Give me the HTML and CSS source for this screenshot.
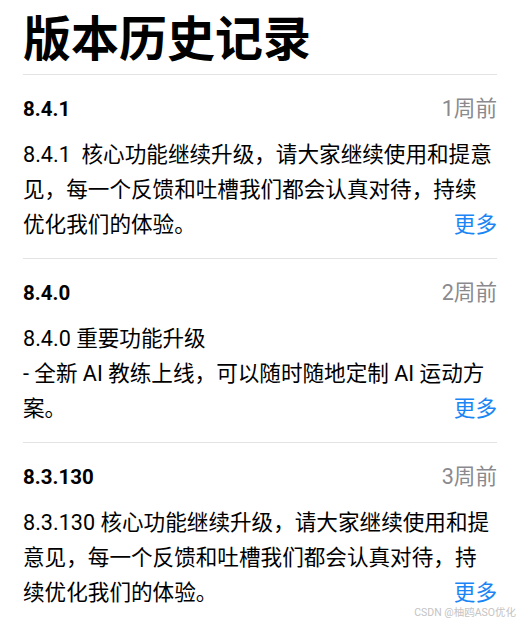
FILE: index.html
```html
<!DOCTYPE html>
<html lang="zh-CN">
<head>
    <meta charset="UTF-8">
    <meta name="viewport" content="width=device-width, initial-scale=1.0">
    <title>版本历史记录</title>
    <link rel="stylesheet" href="styles.css">
</head>
<body>
    <div class="page">
        <h1>版本历史记录</h1>

        <div class="release">
            <div class="release-head">
                <span class="version">8.4.1</span>
                <span class="date">1周前</span>
            </div>
            <p class="notes">8.4.1&nbsp; 核心功能继续升级，请大家继续使用和提意见，每一个反馈和吐槽我们都会认真对待，持续优化我们的体验。<span class="more">更多</span></p>
        </div>

        <div class="release">
            <div class="release-head">
                <span class="version">8.4.0</span>
                <span class="date">2周前</span>
            </div>
            <p class="notes">8.4.0 重要功能升级<br>- 全新 AI 教练上线，可以随时随地定制 AI 运动方案。<span class="more">更多</span></p>
        </div>

        <div class="release">
            <div class="release-head">
                <span class="version">8.3.130</span>
                <span class="date">3周前</span>
            </div>
            <p class="notes">8.3.130 核心功能继续升级，请大家继续使用和提意见，每一个反馈和吐槽我们都会认真对待，持续优化我们的体验。<span class="more">更多</span></p>
        </div>
    </div>
    <div class="watermark">CSDN @柚鸥ASO优化</div>
</body>
</html>
```

FILE: styles.css
```css
*{
    margin: 0;
    padding: 0;
    box-sizing: border-box;
}
body{
    background: #fff;
    color: #000;
    font-family: Roboto, "Noto Sans CJK SC", sans-serif;
    overflow: hidden;
}
.page{
    padding: 5px 23px 0;
}
h1{
    font-family: "Noto Sans CJK SC", sans-serif;
    font-size: 48px;
    font-weight: 700;
    line-height: 60px;
    margin-bottom: 9px;
}
.release{
    border-top: 1px solid #e3e3e5;
    padding: 17px 0 16px;
}
.release-head{
    display: flex;
    justify-content: space-between;
    align-items: center;
    height: 34px;
    line-height: 34px;
}
.version{
    font-size: 20.5px;
    font-weight: 700;
}
.date{
    font-size: 21.6px;
    color: #8a8a8e;
}
.notes{
    position: relative;
    margin-top: 11px;
    font-size: 21.6px;
    line-height: 35px;
}
.more{
    position: absolute;
    right: 0;
    bottom: 0;
    padding-left: 24px;
    color: #1a86f5;
    background: linear-gradient(to right, rgba(255,255,255,0), #fff 24px);
}
.watermark{
    position: absolute;
    right: 4px;
    bottom: 6px;
    font-size: 10.5px;
    color: #c4c4c4;
}
```
